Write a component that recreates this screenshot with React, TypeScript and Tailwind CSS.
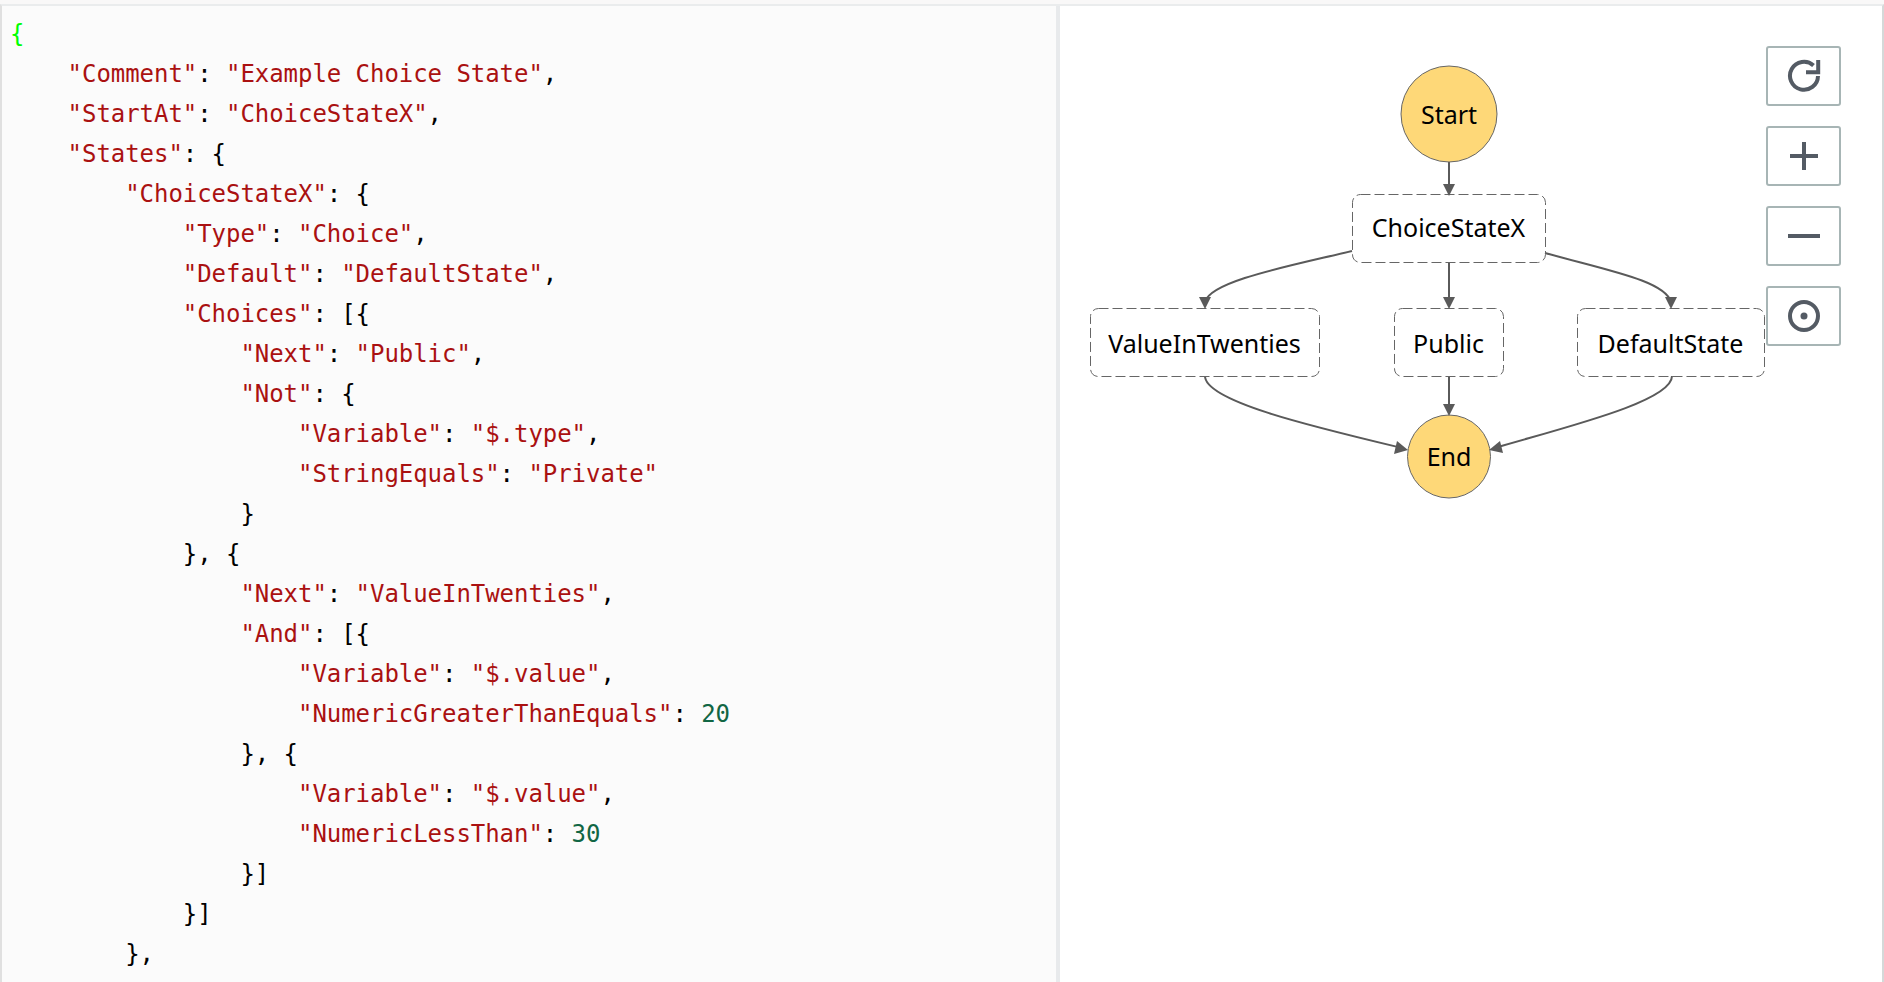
import React from 'react';

type Kind = 's' | 'n' | 'p' | 'g';
type Token = [Kind, string];

const line = (indent: number, ...tokens: Token[]) => ({ indent, tokens });

const code = [
  line(0, ['g', '{']),
  line(1, ['s', '"Comment"'], ['p', ': '], ['s', '"Example Choice State"'], ['p', ',']),
  line(1, ['s', '"StartAt"'], ['p', ': '], ['s', '"ChoiceStateX"'], ['p', ',']),
  line(1, ['s', '"States"'], ['p', ': {']),
  line(2, ['s', '"ChoiceStateX"'], ['p', ': {']),
  line(3, ['s', '"Type"'], ['p', ': '], ['s', '"Choice"'], ['p', ',']),
  line(3, ['s', '"Default"'], ['p', ': '], ['s', '"DefaultState"'], ['p', ',']),
  line(3, ['s', '"Choices"'], ['p', ': [{']),
  line(4, ['s', '"Next"'], ['p', ': '], ['s', '"Public"'], ['p', ',']),
  line(4, ['s', '"Not"'], ['p', ': {']),
  line(5, ['s', '"Variable"'], ['p', ': '], ['s', '"$.type"'], ['p', ',']),
  line(5, ['s', '"StringEquals"'], ['p', ': '], ['s', '"Private"']),
  line(4, ['p', '}']),
  line(3, ['p', '}, {']),
  line(4, ['s', '"Next"'], ['p', ': '], ['s', '"ValueInTwenties"'], ['p', ',']),
  line(4, ['s', '"And"'], ['p', ': [{']),
  line(5, ['s', '"Variable"'], ['p', ': '], ['s', '"$.value"'], ['p', ',']),
  line(5, ['s', '"NumericGreaterThanEquals"'], ['p', ': '], ['n', '20']),
  line(4, ['p', '}, {']),
  line(5, ['s', '"Variable"'], ['p', ': '], ['s', '"$.value"'], ['p', ',']),
  line(5, ['s', '"NumericLessThan"'], ['p', ': '], ['n', '30']),
  line(4, ['p', '}]']),
  line(3, ['p', '}]']),
  line(2, ['p', '},']),
];

const tokenClass: Record<Kind, string> = {
  s: 'text-[#aa1111]',
  n: 'text-[#116644]',
  p: 'text-black',
  g: 'text-[#00ff00]',
};

// diagram coordinates are relative to the right pane
const boxes = [
  { label: 'ChoiceStateX', x: 292, y: 188, w: 193, h: 68, base: 231 },
  { label: 'ValueInTwenties', x: 30, y: 302, w: 229, h: 68, base: 347 },
  { label: 'Public', x: 334, y: 302, w: 109, h: 68, base: 347 },
  { label: 'DefaultState', x: 517, y: 302, w: 187, h: 68, base: 347 },
];

const edges = [
  'M389 156 L389 180',
  'M292 245 C230 260 150 275 145 296',
  'M389 256 L389 294',
  'M485 247 C550 265 605 275 611 296',
  'M145 370 C145 395 250 420 338 441',
  'M389 370 L389 401',
  'M612 370 C612 395 510 420 438 441',
];

const arrows = [
  '383,178 395,178 389,190',
  '139,291 151,291 145,303',
  '383,291 395,291 389,303',
  '605,291 617,291 611,303',
  '337,435 334,448 348,444',
  '383,398 395,398 389,410',
  '440,435 443,447 429,444',
];

function Diagram() {
  return (
    <svg width="824" height="520" className="absolute left-0 top-0 font-['Noto_Sans',sans-serif]">
      {edges.map((d) => (
        <path key={d} d={d} fill="none" stroke="#5a5a5a" strokeWidth="2" />
      ))}
      {boxes.map((b) => (
        <g key={b.label}>
          <rect
            x={b.x + 0.5}
            y={b.y + 0.5}
            width={b.w}
            height={b.h}
            rx="8"
            fill="none"
            stroke="#666666"
            strokeDasharray="10 4"
          />
          <text x={b.x + b.w / 2} y={b.base} textAnchor="middle" fontSize="25" fill="#000">
            {b.label}
          </text>
        </g>
      ))}
      <circle cx="389" cy="108" r="48" fill="#fed878" stroke="#666666" />
      <text x="389" y="118" textAnchor="middle" fontSize="25" fill="#000">Start</text>
      <circle cx="389" cy="450.5" r="41.5" fill="#fed878" stroke="#666666" />
      <text x="389" y="460" textAnchor="middle" fontSize="25" fill="#000">End</text>
      {arrows.map((p) => (
        <polygon key={p} points={p} fill="#5a5a5a" />
      ))}
    </svg>
  );
}

function ToolButton({ children }: { children: React.ReactNode }) {
  return (
    <button className="flex h-[60px] w-[75px] items-center justify-center rounded-[3px] border-2 border-[#a7b5b5] bg-white">
      <svg width="34" height="34" viewBox="0 0 34 34" fill="none" stroke="#545b64" strokeWidth="4">
        {children}
      </svg>
    </button>
  );
}

export default function App() {
  return (
    <div className="flex h-[982px] w-[1884px] flex-col overflow-hidden bg-[#f9f8f8]">
      <div className="h-1 shrink-0" />
      <div className="flex min-h-0 flex-1 border-t-2 border-l-2 border-r-2 border-t-[#eaeced] border-l-[#e0e0e0] border-r-[#d5d9d9]">
        <div className="w-[1054px] shrink-0 overflow-hidden bg-[#fbfbfb] pl-2 pt-2 font-['DejaVu_Sans_Mono',monospace] text-2xl leading-10 tracking-[-0.05px]">
          {code.map((l, i) => (
            <div key={i} className="h-10 whitespace-pre">
              {'    '.repeat(l.indent)}
              {l.tokens.map(([kind, text], j) => (
                <span key={j} className={tokenClass[kind]}>
                  {text}
                </span>
              ))}
            </div>
          ))}
        </div>
        <div className="w-1 shrink-0 bg-[#e8eaec]" />
        <div className="relative flex-1 bg-white">
          <Diagram />
          <div className="absolute right-[41px] top-[40px] flex flex-col gap-5">
            <ToolButton>
              <path d="M31 17 A14 14 0 1 1 26.5 6.5" />
              <path d="M31.2 1 V13.2 H19" />
            </ToolButton>
            <ToolButton>
              <path d="M17 3 V31 M3 17 H31" />
            </ToolButton>
            <ToolButton>
              <path d="M1 17 H33" />
            </ToolButton>
            <ToolButton>
              <circle cx="17" cy="17" r="14" />
              <circle cx="17" cy="17" r="3.5" fill="#545b64" stroke="none" />
            </ToolButton>
          </div>
        </div>
      </div>
    </div>
  );
}
